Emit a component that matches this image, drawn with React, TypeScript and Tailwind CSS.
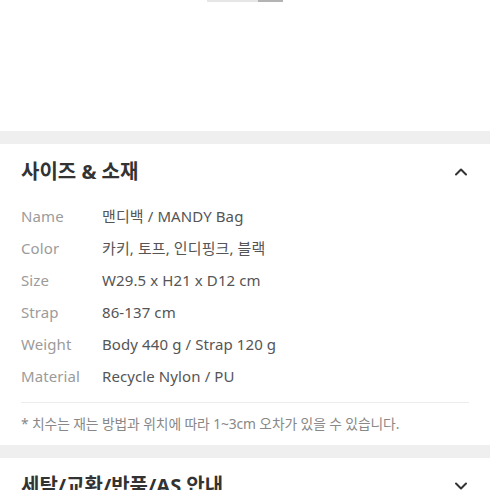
const rows: [string, string][] = [
  ['Name', '맨디백 / MANDY Bag'],
  ['Color', '카키, 토프, 인디핑크, 블랙'],
  ['Size', 'W29.5 x H21 x D12 cm'],
  ['Strap', '86-137 cm'],
  ['Weight', 'Body 440 g / Strap 120 g'],
  ['Material', 'Recycle Nylon / PU'],
];

function Chevron({ up }: { up?: boolean }) {
  return (
    <svg width="16" height="16" viewBox="0 0 16 16" fill="none">
      <path
        d={up ? 'M3 10.5 L8 5.5 L13 10.5' : 'M3 5.5 L8 10.5 L13 5.5'}
        stroke="#333"
        strokeWidth="2"
        strokeLinecap="round"
        strokeLinejoin="round"
      />
    </svg>
  );
}

export default function App() {
  return (
    <div
      className="h-[490px] w-[490px] overflow-hidden bg-white"
      style={{ fontFamily: '"Noto Sans", "Noto Sans CJK KR", sans-serif' }}
    >
      <div className="flex h-[131px] justify-center">
        <div className="flex h-[2px] w-[76px]">
          <div className="flex-1 bg-[#e6e6e6]" />
          <div className="w-[25px] bg-[#b3b3b3]" />
        </div>
      </div>
      <div className="h-[13px] bg-[#efefef]" />

      <div className="px-[21px]">
        <div className="flex h-[56px] items-center justify-between">
          <h2 className="text-[20px] font-bold text-[#333]">사이즈 &amp; 소재</h2>
          <Chevron up />
        </div>
        <div className="border-b border-[#ececec] pb-[10px]">
          {rows.map(([k, v]) => (
            <div key={k} className="flex h-[32px] items-center text-[15px] tracking-[0.1px]">
              <span className="w-[81px] text-[#9b9b9b]">{k}</span>
              <span className="text-[#555]">{v}</span>
            </div>
          ))}
        </div>
        <p className="flex h-[42px] items-center text-[13.8px] tracking-[-0.1px] text-[#888]">
          * 치수는 재는 방법과 위치에 따라 1~3cm 오차가 있을 수 있습니다.
        </p>
      </div>
      <div className="h-[13px] bg-[#efefef]" />

      <div className="px-[21px]">
        <div className="flex h-[56px] items-center justify-between">
          <h2 className="text-[20px] font-bold text-[#333]">세탁/교환/반품/AS 안내</h2>
          <Chevron />
        </div>
      </div>
    </div>
  );
}
